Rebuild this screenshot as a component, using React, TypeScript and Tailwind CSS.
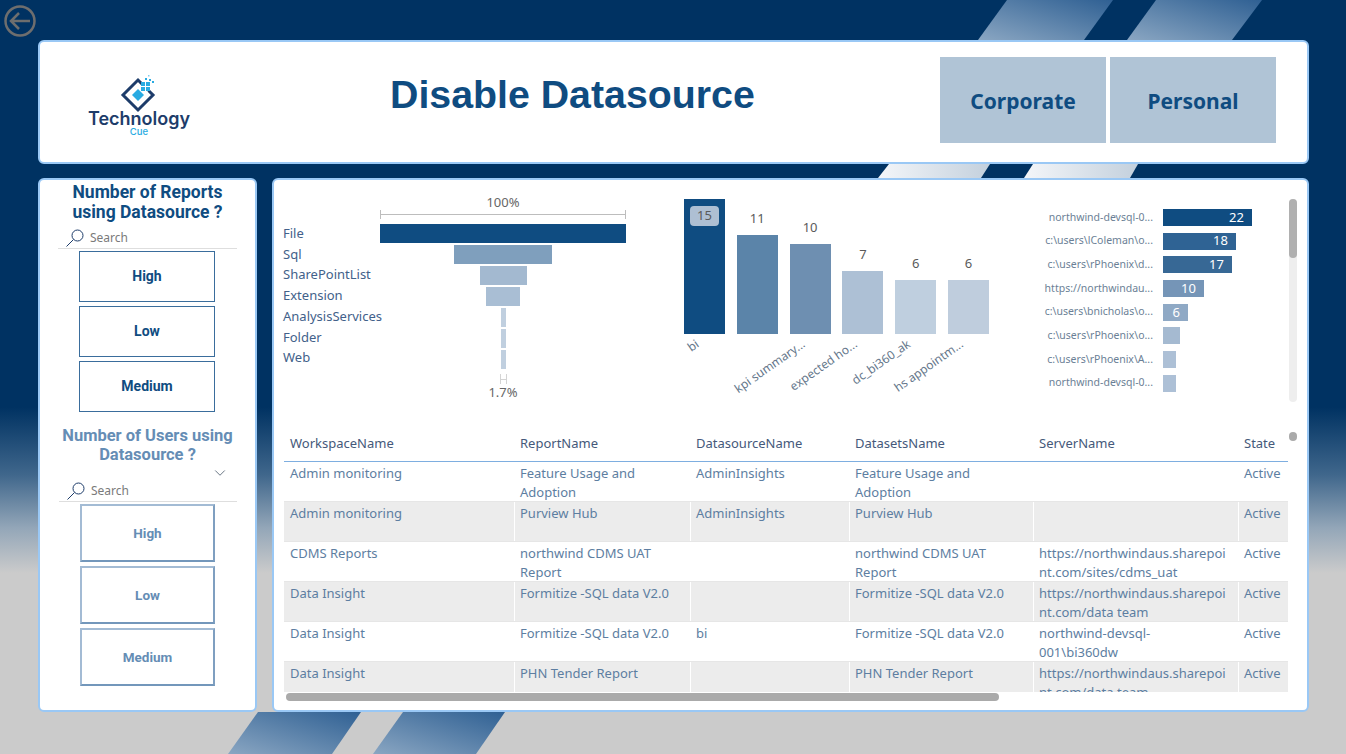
import { ChevronDown } from "lucide-react";

const FUNNEL = [
  { label: "File", bar: "w-[246px] bg-[#0f4c81]" },
  { label: "Sql", bar: "w-[98px] bg-[#7f9fbd]" },
  { label: "SharePointList", bar: "w-[47px] bg-[#a3b9d0]" },
  { label: "Extension", bar: "w-[34px] bg-[#a9bed4]" },
  { label: "AnalysisServices", bar: "w-[5px] bg-[#c0cfdf]" },
  { label: "Folder", bar: "w-[5px] bg-[#c0cfdf]" },
  { label: "Web", bar: "w-[5px] bg-[#c0cfdf]" },
];

const COLUMNS = [
  { value: "15", label: "bi", bar: "h-[135px] bg-[#0f4c81]" },
  { value: "11", label: "", bar: "h-[99px] bg-[#5b84a9]" },
  { value: "10", label: "kpi summary...", bar: "h-[90px] bg-[#6e8fb1]" },
  { value: "7", label: "expected ho...", bar: "h-[63px] bg-[#adc0d5]" },
  { value: "6", label: "dc_bi360_ak", bar: "h-[54px] bg-[#bfcfdf]" },
  { value: "6", label: "hs appointm...", bar: "h-[54px] bg-[#bfcddd]" },
];

const SERVERS = [
  { label: "northwind-devsql-0...", value: "22", bar: "w-[89px] bg-[#0f4c81]" },
  { label: "c:\\users\\lColeman\\o...", value: "18", bar: "w-[73px] bg-[#2f6394]" },
  { label: "c:\\users\\rPhoenix\\d...", value: "17", bar: "w-[69px] bg-[#376895]" },
  { label: "https://northwindau...", value: "10", bar: "w-[41px] bg-[#7595b7]" },
  { label: "c:\\users\\bnicholas\\o...", value: "6", bar: "w-[25px] bg-[#8fa9c5]" },
  { label: "c:\\users\\rPhoenix\\o...", value: "", bar: "w-[17px] bg-[#a5bad1]" },
  { label: "c:\\users\\rPhoenix\\A...", value: "", bar: "w-[13px] bg-[#adc0d6]" },
  { label: "northwind-devsql-0...", value: "", bar: "w-[13px] bg-[#adc0d6]" },
];

const HEADERS = ["WorkspaceName", "ReportName", "DatasourceName", "DatasetsName", "ServerName", "State"];

const ROWS = [
  ["Admin monitoring", "Feature Usage and\nAdoption", "AdminInsights", "Feature Usage and\nAdoption", "", "Active"],
  ["Admin monitoring", "Purview Hub", "AdminInsights", "Purview Hub", "", "Active"],
  ["CDMS Reports", "northwind CDMS UAT\nReport", "", "northwind CDMS UAT\nReport", "https://northwindaus.sharepoi\nnt.com/sites/cdms_uat", "Active"],
  ["Data Insight", "Formitize -SQL data V2.0", "", "Formitize -SQL data V2.0", "https://northwindaus.sharepoi\nnt.com/data team", "Active"],
  ["Data Insight", "Formitize -SQL data V2.0", "bi", "Formitize -SQL data V2.0", "northwind-devsql-\n001\\bi360dw", "Active"],
  ["Data Insight", "PHN Tender Report", "", "PHN Tender Report", "https://northwindaus.sharepoi\nnt.com/data team", "Active"],
];

const SEGOE = "font-['Noto_Sans','Open_Sans',sans-serif]";

function Backdrop() {
  return (
    <div className="absolute inset-0 bg-[linear-gradient(180deg,#003262_0%,#003262_54%,#40678c_63%,#93a6b8_70%,#cbcbcb_76%,#cbcbcb_100%)]">
      <svg className="h-full w-full" viewBox="0 0 1346 754">
        <defs>
          <linearGradient id="blue" x1="0" y1="1" x2="1" y2="0">
            <stop offset="0" stopColor="#8aa6c2" />
            <stop offset="1" stopColor="#2f6093" />
          </linearGradient>
          <linearGradient id="pale" x1="0" y1="0" x2="1" y2="0">
            <stop offset="0" stopColor="#f4f6f9" />
            <stop offset="1" stopColor="#c3d0dd" />
          </linearGradient>
        </defs>
        <polygon points="978,40 1007,0 1113,0 1084,40" fill="url(#blue)" />
        <polygon points="1127,40 1156,0 1262,0 1232,40" fill="url(#blue)" />
        <polygon points="878,178 889,164 990,164 981,178" fill="url(#pale)" />
        <polygon points="1024,178 1033,164 1138,164 1130,178" fill="url(#pale)" />
        <polygon points="228,754 258,712 361,712 332,754" fill="url(#blue)" />
        <polygon points="373,754 403,712 505,712 476,754" fill="url(#blue)" />
      </svg>
    </div>
  );
}

function Logo() {
  return (
    <div className="mt-[6px] flex w-[102px] flex-col items-center">
      <svg width="40" height="40" viewBox="0 0 40 40">
        <path d="M24 12 L19 7 L4 22 L19 37 L34 22 L29.5 17.5" fill="none" stroke="#1d3c6a" strokeWidth="3" />
        <polygon points="19,16 25,22 19,28 13,22" fill="#29abe2" />
        <rect x="22" y="14" width="4" height="4" fill="#29abe2" />
        <rect x="27" y="14" width="4" height="4" fill="#29abe2" />
        <rect x="22" y="9" width="4" height="4" fill="#29abe2" />
        <rect x="27" y="9" width="4" height="4" fill="#29abe2" />
        <rect x="26" y="5" width="2" height="2" fill="#29abe2" />
        <rect x="30" y="6" width="2" height="2" fill="#29abe2" />
        <rect x="33" y="8" width="2" height="2" fill="#29abe2" />
        <rect x="29" y="2" width="1.5" height="1.5" fill="#7fcdf0" />
      </svg>
      <span className="mt-[-4px] font-['Inter',sans-serif] text-[18px] leading-[19px] font-semibold whitespace-nowrap text-[#1d3c6a]">Technology</span>
      <span className="mt-[-1px] font-['Inter',sans-serif] text-[9.5px] leading-[10px] font-medium text-[#29abe2]">Cue</span>
    </div>
  );
}

function Header() {
  return (
    <header className="flex h-[124px] items-center rounded-[6px] border-2 border-[#9ac8f5] bg-white pl-[48px]">
      <Logo />
      <h1 className="mt-[-14px] ml-[200px] font-['Liberation_Sans',sans-serif] text-[39.3px] leading-none font-bold whitespace-nowrap text-[#0f4c81]">
        Disable Datasource
      </h1>
      <div className={`mt-[-4px] mr-[31px] ml-auto flex gap-[4px] ${SEGOE} text-[21px] font-bold text-[#0f4c81]`}>
        <button className="h-[86px] w-[166px] bg-[#b0c4d6] pt-[4px]">Corporate</button>
        <button className="h-[86px] w-[166px] bg-[#b0c4d6] pt-[4px]">Personal</button>
      </div>
    </header>
  );
}

function SlicerSearch({ className }: { className: string }) {
  return (
    <div className={`mx-[18px] flex h-[22px] items-center gap-[6px] border-b border-[#dedede] pt-[1px] pl-[8px] ${className}`}>
      <svg width="18" height="18" viewBox="0 0 18 18" fill="none" stroke="#1d3c6a" strokeWidth="1">
        <circle cx="11.5" cy="6.5" r="5.5" />
        <path d="M7.5 10.5 L0.5 17.5" />
      </svg>
      <span className={`${SEGOE} text-[12px] text-[#7a7a7a]`}>Search</span>
    </div>
  );
}

function SidePanel() {
  return (
    <aside className="flex h-[534px] w-[219px] flex-col rounded-[6px] border-2 border-[#9ac8f5] bg-white font-['Roboto',sans-serif]">
      <h2 className="mt-[2px] text-center text-[17.5px] leading-[20px] font-bold text-[#0f4c81]">
        Number of Reports
        <br />
        using Datasource ?
      </h2>
      <SlicerSearch className="mt-[5px]" />
      <div className="mt-[2px] flex flex-col gap-[4px] pl-[39px]">
        {["High", "Low", "Medium"].map((label) => (
          <button
            key={label}
            className="h-[51px] w-[136px] border-[1.5px] border-[#3a6d9c] text-[14px] font-bold text-[#0f4c81]"
          >
            {label}
          </button>
        ))}
      </div>
      <h2 className="mt-[14px] text-center text-[16.5px] leading-[19px] font-bold text-[#658db5]">
        Number of Users using
        <br />
        Datasource ?
      </h2>
      <div className="flex h-[13px] justify-end pr-[26px]">
        <ChevronDown className="h-[18px] w-[18px] text-[#3a4a5c]" strokeWidth={1} />
      </div>
      <SlicerSearch className="mt-[3px] ml-[19px]" />
      <div className="mt-[2px] flex flex-col gap-[4px] pl-[40px]">
        {["High", "Low", "Medium"].map((label) => (
          <button
            key={label}
            className="h-[58px] w-[135px] border-2 border-[#a3bbd4] border-r-[#7f9fc0] border-b-[#7397bb] text-[13.5px] font-bold text-[#658db5]"
          >
            {label}
          </button>
        ))}
      </div>
    </aside>
  );
}

function Funnel() {
  return (
    <div className="ml-[9px] flex">
      <div className={`mt-[43px] flex w-[97px] flex-col ${SEGOE} text-[13px] leading-[20.7px] text-[#42618a]`}>
        {FUNNEL.map((row) => (
          <span key={row.label} className="whitespace-nowrap">{row.label}</span>
        ))}
      </div>
      <div className={`flex w-[246px] flex-col items-center pt-[15px] ${SEGOE} text-[13px] text-[#666666]`}>
        <span className="h-[15px] leading-[15px]">100%</span>
        <div className="mb-[5px] h-[9px] w-full border-x border-[#bdbdbd] bg-[linear-gradient(#bdbdbd,#bdbdbd)] bg-[length:100%_1px] bg-center bg-no-repeat" />
        <div className="flex w-full flex-col items-center gap-[2px]">
          {FUNNEL.map((row) => (
            <div key={row.label} className={`h-[19px] ${row.bar}`} />
          ))}
        </div>
        <div className="mt-[5px] h-[10px] w-[7px] border-x border-[#d4d4d4] bg-[linear-gradient(#d4d4d4,#d4d4d4)] bg-[length:100%_1px] bg-center bg-no-repeat" />
        <span className="mt-[1px] leading-[15px]">1.7%</span>
      </div>
    </div>
  );
}

function ColumnChart() {
  return (
    <div className={`mt-[19px] ml-[58px] flex h-[135px] items-end gap-[11.8px] ${SEGOE} text-[13px] text-[#5a5a5a]`}>
      {COLUMNS.map((col, i) => (
        <div key={i} className="relative flex w-[41px] flex-col items-center">
          {i > 0 && <span className="mb-[9px] leading-[16px]">{col.value}</span>}
          <div className={`relative w-full ${col.bar}`}>
            {i === 0 && (
              <span className="absolute top-[7px] left-[6px] flex h-[20px] w-[29px] items-center justify-center rounded bg-[#aebfd3]">
                {col.value}
              </span>
            )}
          </div>
          <span className="absolute top-full right-[calc(50%+11px)] mt-[3px] origin-top-right rotate-[-35deg] text-[12px] leading-[14px] whitespace-nowrap text-[#66788c]">
            {col.label}
          </span>
        </div>
      ))}
    </div>
  );
}

function ServerBars() {
  return (
    <div className={`mt-[29px] ml-[54px] flex w-[209px] flex-col gap-[6.7px] ${SEGOE}`}>
      {SERVERS.map((row, i) => (
        <div key={i} className="flex h-[17px] items-center gap-[10px]">
          <span className="w-[110px] text-right text-[10.5px] whitespace-nowrap text-[#6b7f96]">{row.label}</span>
          <div className={`flex h-[17px] items-center justify-end pr-[8px] text-[13px] text-white ${row.bar}`}>
            {row.value}
          </div>
        </div>
      ))}
    </div>
  );
}

function DataTable() {
  const cols = "grid grid-cols-[230px_176px_159px_184px_205px_50px]";
  return (
    <div className={`mx-[10px] h-[264px] w-[1004px] overflow-hidden ${SEGOE} text-[13px]`}>
      <div className={`${cols} h-[34px] items-center border-b border-[#7eaee0] pb-[2px] text-[#45597a]`}>
        {HEADERS.map((h) => (
          <span key={h} className="pl-[6px]">{h}</span>
        ))}
      </div>
      {ROWS.map((row, i) => (
        <div key={i} className={`${cols} h-[40px] overflow-hidden border-b border-[#e6e6e6] ${i % 2 ? "bg-[#ececec]" : "bg-white"}`}>
          {row.map((cell, j) => (
            <div
              key={j}
              className={`h-[40px] pt-[2px] leading-[19px] whitespace-pre text-[#5d7ea1] ${j > 0 ? "border-l border-white pl-[5px]" : "pl-[6px]"}`}
            >
              {cell}
            </div>
          ))}
        </div>
      ))}
    </div>
  );
}

function MainPanel() {
  return (
    <main className="relative h-[534px] w-[1037px] rounded-[6px] border-2 border-[#9ac8f5] bg-white">
      <div className="flex h-[248px]">
        <Funnel />
        <ColumnChart />
        <ServerBars />
      </div>
      <DataTable />
      {/* scrollbars sit over the visuals */}
      <div className="absolute top-[19px] left-[1015px] h-[203px] w-[8px] rounded bg-[#eeeeee]">
        <div className="h-[59px] rounded bg-[#b0b0b0]" />
      </div>
      <div className="absolute top-[252px] left-[1015px] h-[9px] w-[8px] rounded-full bg-[#aaaaaa]" />
      <div className="absolute top-[513px] left-[12px] h-[8px] w-[713px] rounded bg-[#aaaaaa]" />
    </main>
  );
}

export default function App() {
  return (
    <div className="relative h-[754px] w-[1346px] overflow-hidden">
      <Backdrop />
      <svg className="absolute top-[5px] left-[4px]" width="32" height="32" viewBox="0 0 32 32" fill="none" stroke="#6e6e6e" strokeWidth="2.5">
        <circle cx="16" cy="16" r="14.5" />
        <path d="M26 16 H7 M15 8 L7 16 L15 24" />
      </svg>
      <div className="relative flex flex-col gap-[14px] pt-[40px] pr-[37px] pl-[38px]">
        <Header />
        <div className="flex gap-[15px]">
          <SidePanel />
          <MainPanel />
        </div>
      </div>
    </div>
  );
}
